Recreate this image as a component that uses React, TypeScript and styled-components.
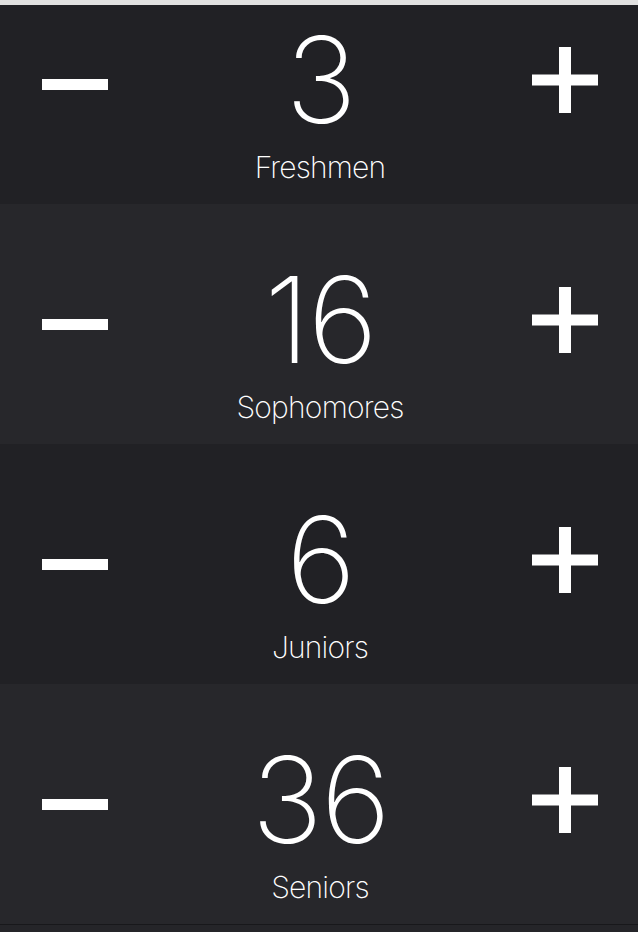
import * as React from 'react';
import styled, { createGlobalStyle } from 'styled-components';

type ClassCount = {
  label: string;
  count: number;
};

const initialClasses: ClassCount[] = [
  { label: 'Freshmen', count: 3 },
  { label: 'Sophomores', count: 16 },
  { label: 'Juniors', count: 6 },
  { label: 'Seniors', count: 36 },
];

function MinusIcon() {
  return (
    <svg width="66" height="11" viewBox="0 0 66 11" aria-hidden="true">
      <rect x="0" y="0" width="66" height="11" fill="#ffffff" />
    </svg>
  );
}

function PlusIcon() {
  return (
    <svg width="66" height="66" viewBox="0 0 66 66" aria-hidden="true">
      <rect x="0" y="27.5" width="66" height="11" fill="#ffffff" />
      <rect x="27" y="0" width="12" height="66" fill="#ffffff" />
    </svg>
  );
}

function App() {
  const [classes, setClasses] = React.useState<ClassCount[]>(initialClasses);

  const change = (index: number, delta: number) => {
    setClasses((prev) =>
      prev.map((c, i) =>
        i === index ? { ...c, count: Math.max(0, c.count + delta) } : c
      )
    );
  };

  return (
    <>
      <GlobalStyle />
      <TopStrip />
      <Viewport>
        <List>
          {classes.map((c, i) => (
            <Row key={c.label} $odd={i % 2 === 0}>
              <MinusButton onClick={() => change(i, -1)} aria-label="Decrease">
                <MinusIcon />
              </MinusButton>
              <Counter>
                <Count>{c.count}</Count>
                <Label>{c.label}</Label>
              </Counter>
              <PlusButton onClick={() => change(i, 1)} aria-label="Increase">
                <PlusIcon />
              </PlusButton>
            </Row>
          ))}
          <Footer />
        </List>
      </Viewport>
    </>
  );
}

const GlobalStyle = createGlobalStyle`
  html, body {
    margin: 0;
    padding: 0;
    background: #252529;
    overflow: hidden;
  }
  body {
    font-family: Inter, "Helvetica Neue", "Liberation Sans", sans-serif;
    color: #ffffff;
  }
`;

const TopStrip = styled.div`
  height: 5px;
  background: #e1e1e1;
`;

const Viewport = styled.div`
  height: 927px;
  overflow: hidden;
`;

const List = styled.div`
  display: flex;
  flex-direction: column;
  margin-top: -41px;
`;

const Row = styled.div<{ $odd: boolean }>`
  display: grid;
  grid-template-columns: 1fr auto 1fr;
  align-items: center;
  height: 240px;
  padding: 0 40px 0 42px;
  background: ${(props) => (props.$odd ? '#212125' : '#27272b')};
`;

const IconButton = styled.button`
  appearance: none;
  border: 0;
  background: none;
  padding: 0;
  display: flex;
  cursor: pointer;
`;

const MinusButton = styled(IconButton)`
  justify-self: start;
  margin-top: 1px;
`;

const PlusButton = styled(IconButton)`
  justify-self: end;
  margin-bottom: 8px;
`;

const Counter = styled.div`
  display: flex;
  flex-direction: column;
  align-items: center;
  align-self: start;
  padding-top: 56px;
`;

const Count = styled.div`
  font-size: 120px;
  font-weight: 200;
  line-height: 120px;
  letter-spacing: -2px;
`;

const Label = styled.div`
  margin-top: 12px;
  font-size: 30px;
  font-weight: 200;
  line-height: 30px;
  letter-spacing: -0.8px;
`;

const Footer = styled.div`
  height: 12px;
  border-top: 1px solid #18181b;
  background: #252529;
`;

export default App;
